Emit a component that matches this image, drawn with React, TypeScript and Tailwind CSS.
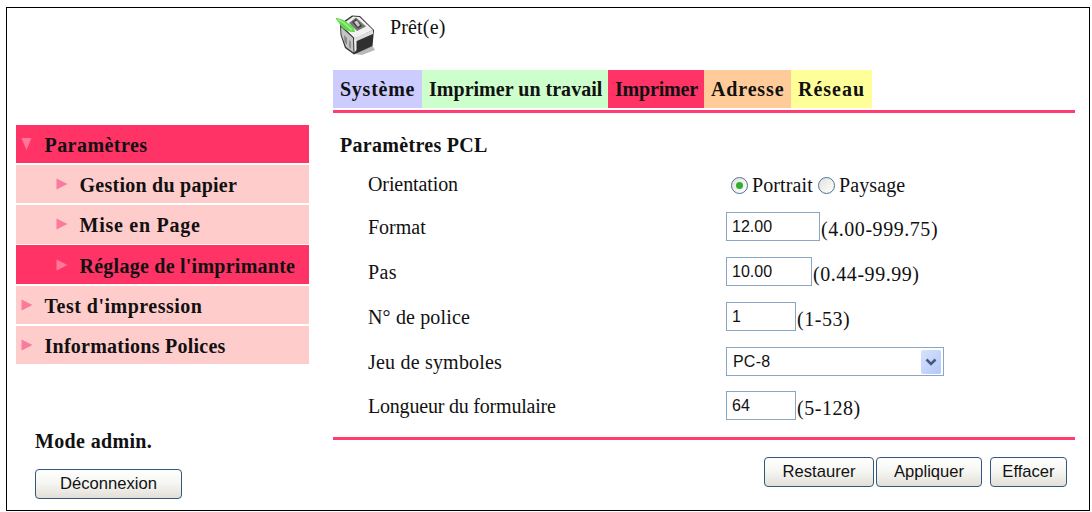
import clsx from "clsx"

const tabs = [
  { label: "Système", className: "w-[89px] bg-[#ccccff] tracking-[0.75px]" },
  { label: "Imprimer un travail", className: "w-[186px] bg-[#ccffcc] tracking-[0.02px]" },
  { label: "Imprimer", className: "w-[96px] bg-[#ff3366] tracking-[-0.2px]" },
  { label: "Adresse", className: "w-[87px] bg-[#ffcc99] tracking-[0.85px]" },
  { label: "Réseau", className: "w-[81px] bg-[#ffff99] tracking-[1px]" },
]

const menu = [
  { label: "Paramètres", active: true, open: true, sub: false, tracking: "tracking-[0.45px]" },
  { label: "Gestion du papier", active: false, open: false, sub: true, tracking: "tracking-[0.25px]" },
  { label: "Mise en Page", active: false, open: false, sub: true, tracking: "tracking-[0.75px]" },
  { label: "Réglage de l'imprimante", active: true, open: false, sub: true, tracking: "tracking-[0.25px]" },
  { label: "Test d'impression", active: false, open: false, sub: false, tracking: "tracking-[0.5px]" },
  { label: "Informations Polices", active: false, open: false, sub: false, tracking: "tracking-[0.25px]" },
]

function PrinterIcon() {
  return (
    <svg width="42" height="44" viewBox="0 0 42 44" className="shrink-0">
      <path d="M19 40L36 31L39 36L26 41Z" fill="#b9b9b9" />
      <path d="M4 10L16 1.5L24 2L38 16L36.5 32L18 40.5L9 34L4.5 21Z" fill="#333" />
      <path d="M5 13L17 24L17.5 38.5L10 33L5.5 21Z" fill="#c4c4c4" />
      <path d="M8 21L11 24V31L8.5 28Z" fill="#888" />
      <path d="M13 26L15 28V35L13 33Z" fill="#8f8f8f" />
      <path d="M5 11L17 2.5L23.5 3L37 16L19 24.5Z" fill="#f1f1f1" />
      <path d="M13 9L20 3.5L30 12.5L21 17Z" fill="#777" />
      <path d="M16 8L20 5L26 12L22 14.5Z" fill="#3c3c3c" />
      <path d="M18 8L21 6.5L24 11L22 13Z" fill="#c8c8c8" />
      <path d="M18 24L37 16V20L18.5 28Z" fill="#dcdcdc" />
      <path d="M19 28.5L36.5 20.5L36 31L19.5 39Z" fill="#303030" />
      <path d="M18 25L20.5 26V36L18.5 38.5Z" fill="#eee" />
      <path d="M-1 4C4 4 9 6 13 10C17 12 18 14 19 18C13 18 8 16 5 12C3 9 1 6 -1 4Z" fill="#62d84c" />
      <path d="M2 5.5L8 9L16 16" stroke="#96ef80" strokeWidth="1.8" fill="none" />
    </svg>
  )
}

function Arrow({ open, active }: { open: boolean; active: boolean }) {
  return (
    <svg
      width="12"
      height="12"
      viewBox="0 0 12 12"
      className={clsx("shrink-0", active ? "text-[#ff7799]" : "text-[#fa7a9b]")}
    >
      <path d={open ? "M0.5 0H10.5L5.5 12Z" : "M0.5 0.5L11.5 6L0.5 11.5Z"} fill="currentColor" />
    </svg>
  )
}

function Radio({ checked = false }: { checked?: boolean }) {
  return (
    <span className="flex h-[17px] w-[17px] items-center justify-center rounded-full border-[1.5px] border-[#4b7399] bg-linear-to-br from-[#e2e2dc] to-white">
      {checked && <span className="h-[7px] w-[7px] rounded-full bg-[#2fae2f]" />}
    </span>
  )
}

function Row({ label, className, children }: { label: string; className: string; children: React.ReactNode }) {
  return (
    <div className={clsx("flex items-center", className)}>
      <span className="w-[358px] shrink-0">{label}</span>
      {children}
    </div>
  )
}

function Field({ value, range, className }: { value: string; range: string; className: string }) {
  return (
    <>
      <span
        className={clsx(
          "flex h-[29px] items-center border-[1.5px] border-[#8ba6c4] bg-white pl-[5px] font-['Liberation_Sans',sans-serif] text-[16px] tracking-normal",
          className
        )}
      >
        {value}
      </span>
      <span className="pt-[5px] pl-px tracking-[0.55px]">{range}</span>
    </>
  )
}

function Button({ label, className }: { label: string; className: string }) {
  return (
    <button
      className={clsx(
        "flex h-[30px] items-center justify-center rounded-[4px] border-[1.5px] border-[#33587f] bg-linear-to-b from-white via-[#f5f5f1] to-[#e2dfd6] pb-px font-['Liberation_Sans',sans-serif] text-[16.6px]",
        className
      )}
    >
      {label}
    </button>
  )
}

export default function App() {
  return (
    <div className="h-[512px] w-[1092px] bg-white pt-[7px] pl-[6px] font-['Liberation_Serif',serif] text-[20px] leading-[22px] whitespace-nowrap text-[#111]">
      <div className="flex h-[504px] w-[1084px] border border-black">
        <aside className="w-[302px] shrink-0 pt-[116.5px] pl-[8.5px] font-bold">
          <nav className="flex flex-col gap-[1.8px]">
            {menu.map((item) => (
              <div
                key={item.label}
                className={clsx(
                  "flex h-[38.5px] items-center",
                  item.sub ? "gap-[12px] pl-[40px]" : "gap-[12px] pl-[5px]",
                  item.active ? "bg-[#ff3366]" : "bg-[#ffcccc]"
                )}
              >
                <Arrow open={item.open} active={item.active} />
                <span className={clsx("pt-[2px]", item.tracking)}>{item.label}</span>
              </div>
            ))}
          </nav>
          <div className="pt-[66px] pl-[19.5px]">
            <p className="tracking-[0.35px]">Mode admin.</p>
            <Button label="Déconnexion" className="mt-[17px] w-[147px] font-normal" />
          </div>
        </aside>

        <main className="ml-[24px] w-[742px]">
          <header className="flex h-[62px] pt-[6px] pl-[3px]">
            <PrinterIcon />
            <span className="pt-[2px] pl-[12px] tracking-[0.15px]">Prêt(e)</span>
          </header>
          <div className="flex h-[38px] font-bold">
            {tabs.map((tab) => (
              <div key={tab.label} className={clsx("flex items-center pl-[7px]", tab.className)}>
                {tab.label}
              </div>
            ))}
          </div>
          <div className="mt-[2px] h-[2.5px] bg-[#ff3d6e]" />

          <h1 className="mt-[21.5px] pl-[7px] font-bold tracking-[0.3px]">Paramètres PCL</h1>
          <div className="mt-[8px] pl-[35px]">
            <Row label="Orientation" className="h-[40px] tracking-[-0.1px]">
              <div className="flex items-center pt-[2px] pl-[5px] tracking-[0.1px]">
                <Radio checked />
                <span className="w-[66px] pl-[4px]">Portrait</span>
                <span className="pl-[4px]">
                  <Radio />
                </span>
                <span className="pl-[4px]">Paysage</span>
              </div>
            </Row>
            <Row label="Format" className="h-[45px]">
              <Field value="12.00" range="(4.00-999.75)" className="w-[94px]" />
            </Row>
            <Row label="Pas" className="h-[45px] tracking-[0.4px]">
              <Field value="10.00" range="(0.44-99.99)" className="w-[86px]" />
            </Row>
            <Row label="N° de police" className="h-[45px] tracking-[0.15px]">
              <Field value="1" range="(1-53)" className="w-[70px]" />
            </Row>
            <Row label="Jeu de symboles" className="h-[45px] tracking-[0.2px]">
              <div className="flex h-[29px] w-[218px] items-center justify-between border-[1.5px] border-[#8ba6c4] pr-[2px] pl-[6px] font-['Liberation_Sans',sans-serif] text-[16px]">
                PC-8
                <span className="flex h-[24px] w-[20px] items-center justify-center rounded-[2px] bg-linear-to-br from-[#d7e2fd] to-[#b3c8f8]">
                  <svg width="12" height="8" viewBox="0 0 12 8">
                    <path d="M1.5 1.5L6 6L10.5 1.5" fill="none" stroke="#465b80" strokeWidth="2.6" />
                  </svg>
                </span>
              </div>
            </Row>
            <Row label="Longueur du formulaire" className="h-[43px] tracking-[-0.2px]">
              <Field value="64" range="(5-128)" className="w-[70px]" />
            </Row>
          </div>
          <div className="mt-[10px] h-[2.5px] bg-[#ff3d6e]" />

          <div className="mt-[17.5px] flex justify-end pr-[8px]">
            <Button label="Restaurer" className="w-[110px]" />
            <Button label="Appliquer" className="ml-[2px] w-[106px]" />
            <Button label="Effacer" className="ml-[8px] w-[77px]" />
          </div>
        </main>
      </div>
    </div>
  )
}
